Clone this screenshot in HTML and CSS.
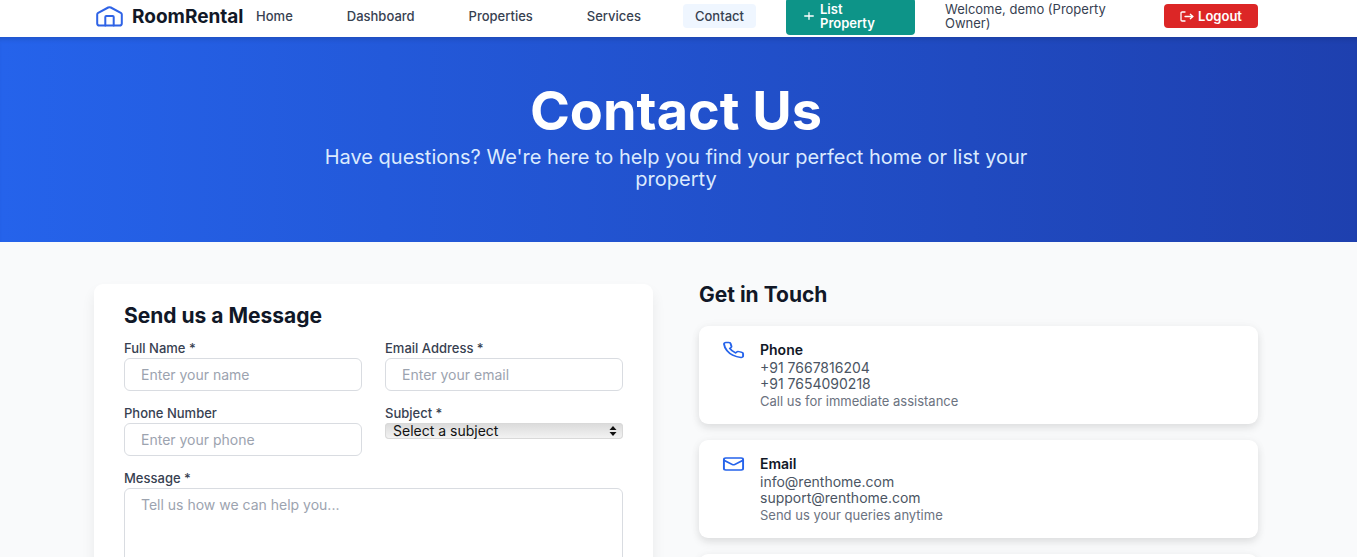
FILE: index.html
```html
<!DOCTYPE html>
<html lang="en">
<head>
<meta charset="utf-8">
<title>RoomRental - Contact Us</title>
<link rel="stylesheet" href="styles.css">
</head>
<body>
<header class="navbar">
  <div class="container navbar-row">
    <a class="brand" href="#">
      <svg class="brand-icon" viewBox="0 0 27 21" fill="none" stroke="currentColor" stroke-width="2" stroke-linejoin="round" stroke-linecap="round" aria-hidden="true">
        <path d="M1.2 8.6Q1.2 7.500 2.200 6.900L12.200 1.500Q13.500.8 14.800 1.500L24.800 6.900Q25.800 7.500 25.800 8.600V17.500Q25.800 19.600 23.500 19.600H3.500Q1.200 19.600 1.200 17.500Z"/>
        <path d="M9.300 19.500V11Q9.300 10 10.300 10H16.700Q17.700 10 17.700 11V19.500"/>
      </svg>
      <span>RoomRental</span>
    </a>
    <nav class="nav-links">
      <a class="nav-link" href="#">Home</a>
      <a class="nav-link" href="#">Dashboard</a>
      <a class="nav-link" href="#">Properties</a>
      <a class="nav-link" href="#">Services</a>
      <a class="nav-link nav-link-active" href="#">Contact</a>
      <a class="list-button" href="#">
        <svg class="plus-icon" viewBox="0 0 10 8" stroke="currentColor" stroke-width="1.300" stroke-linecap="round" aria-hidden="true"><path d="M5 .7V7.300M.7 4H9.300"/></svg>
        <span>List Property</span>
      </a>
      <span class="welcome">Welcome, demo (Property Owner)</span>
      <button class="logout" type="button">
        <svg class="logout-icon" viewBox="0 0 14 11" fill="none" stroke="currentColor" stroke-width="1.300" stroke-linecap="round" stroke-linejoin="round" aria-hidden="true"><path d="M5 1H2.200Q1 1 1 2V9Q1 10 2.200 10H5M5 5.500H13M10.300 3.300L13 5.500L10.300 7.700"/></svg>
        <span>Logout</span>
      </button>
    </nav>
  </div>
</header>

<section class="hero">
  <h1 class="hero-title">Contact Us</h1>
  <p class="hero-text">Have questions? We're here to help you find your perfect home or list your property</p>
</section>

<main class="container content">
  <form class="card form-card">
    <h2 class="heading">Send us a Message</h2>
    <div class="form-grid">
      <div class="field">
        <label class="label" for="name">Full Name *</label>
        <input class="input" id="name" type="text" placeholder="Enter your name">
      </div>
      <div class="field">
        <label class="label" for="email">Email Address *</label>
        <input class="input" id="email" type="email" placeholder="Enter your email">
      </div>
      <div class="field">
        <label class="label" for="phone">Phone Number</label>
        <input class="input" id="phone" type="tel" placeholder="Enter your phone">
      </div>
      <div class="field">
        <label class="label" for="subject">Subject *</label>
        <div class="select-wrap">
          <select class="select" id="subject"><option>Select a subject</option></select>
          <svg class="select-arrows" viewBox="0 0 8 10" fill="currentColor" aria-hidden="true"><path d="M4 0L7.500 4H.5ZM4 10L.5 6H7.500Z"/></svg>
        </div>
      </div>
      <div class="field field-wide">
        <label class="label" for="message">Message *</label>
        <textarea class="input textarea" id="message" rows="6" placeholder="Tell us how we can help you..."></textarea>
      </div>
    </div>
  </form>

  <section class="contact-info">
    <h2 class="heading">Get in Touch</h2>
    <div class="info-list">
      <article class="card info-card">
        <svg class="info-icon" viewBox="0 0 24 24" preserveAspectRatio="none" fill="none" stroke="currentColor" stroke-width="2" stroke-linecap="round" stroke-linejoin="round" aria-hidden="true"><path d="M22 16.920v3a2 2 0 0 1-2.180 2 19.790 19.790 0 0 1-8.630-3.070 19.500 19.500 0 0 1-6-6 19.790 19.790 0 0 1-3.070-8.670A2 2 0 0 1 4.110 2h3a2 2 0 0 1 2 1.720 12.840 12.840 0 0 0 .7 2.810 2 2 0 0 1-.45 2.110L8.090 9.910a16 16 0 0 0 6 6l1.270-1.270a2 2 0 0 1 2.110-.45 12.840 12.840 0 0 0 2.810.7A2 2 0 0 1 22 16.920z"/></svg>
        <div>
          <h3 class="info-title">Phone</h3>
          <p class="info-line">+91 7667816204</p>
          <p class="info-line">+91 7654090218</p>
          <p class="info-note">Call us for immediate assistance</p>
        </div>
      </article>
      <article class="card info-card">
        <svg class="info-icon" viewBox="0 0 24 24" preserveAspectRatio="none" fill="none" stroke="currentColor" stroke-width="2" stroke-linecap="round" stroke-linejoin="round" aria-hidden="true"><rect x="2" y="4" width="20" height="16" rx="2"/><path d="M22 7l-8.970 5.700a1.940 1.940 0 0 1-2.060 0L2 7"/></svg>
        <div>
          <h3 class="info-title">Email</h3>
          <p class="info-line">info@renthome.com</p>
          <p class="info-line">support@renthome.com</p>
          <p class="info-note">Send us your queries anytime</p>
        </div>
      </article>
      <article class="card info-card"></article>
    </div>
  </section>
</main>
</body>
</html>
```
FILE: styles.css
```css
* { box-sizing: border-box; }
body {
  margin: 0;
  height: 100vh;
  overflow: hidden;
  background: #f9fafb;
  color: #111827;
  font-family: Inter, "Liberation Sans", sans-serif;
}
h1, h2, h3, p { margin: 0; }
a { color: inherit; text-decoration: none; }
button, input, select, textarea { font: inherit; }
.container { padding: 0 99px 0 94px; }

.navbar { background: #fff; }
.navbar-row {
  display: flex;
  align-items: center;
  justify-content: space-between;
  height: 37px;
  padding-bottom: 5px;
}
.brand {
  display: flex;
  align-items: center;
  gap: 9px;
  padding-left: 2px;
  font-size: 19px;
  font-weight: 700;
}
.brand-icon { width: 27px; height: 21px; color: #2f63e6; }
.nav-links {
  display: flex;
  align-items: center;
  gap: 30px;
  font-size: 13px;
  line-height: 14px;
  font-weight: 500;
  color: #374151;
}
.nav-link { padding: 5px 12px; border-radius: 4px; }
.nav-link-active { background: #eff6ff; }
.list-button {
  display: flex;
  align-items: center;
  gap: 6px;
  width: 129px;
  height: 37px;
  padding: 0 36px 0 18px;
  border-radius: 4px;
  background: #0d9488;
  color: #fff;
  font-weight: 600;
}
.plus-icon { flex: none; width: 10px; height: 8px; }
.welcome { width: 189px; font-weight: 400; }
.logout {
  display: flex;
  align-items: center;
  justify-content: center;
  gap: 4px;
  width: 94px;
  height: 24px;
  padding: 0;
  border: 0;
  border-radius: 4px;
  background: #dc2626;
  color: #fff;
  font-weight: 600;
}
.logout-icon { width: 14px; height: 11px; }

.hero {
  display: flex;
  flex-direction: column;
  align-items: center;
  gap: 9px;
  padding: 48px 5px 52px 0;
  background: linear-gradient(90deg, #2563eb, #1e40af);
  box-shadow: inset 0 5px 5px -3px rgba(0, 0, 0, 0.15);
  color: #fff;
  text-align: center;
}
.hero-title { font-size: 54px; line-height: 52px; font-weight: 700; }
.hero-text { max-width: 760px; font-size: 20px; line-height: 22px; color: #dbeafe; }

.content {
  display: grid;
  grid-template-columns: 1fr 1fr;
  gap: 46px;
  padding-top: 42px;
}
.card {
  border-radius: 9px;
  background: #fff;
  box-shadow: 0 4px 8px rgba(0, 0, 0, 0.1), 0 0 12px rgba(0, 0, 0, 0.03);
}
.form-card {
  padding: 21px 30px;
  box-shadow: 0 8px 14px rgba(0, 0, 0, 0.07);
}
.heading { font-size: 21px; line-height: 22px; font-weight: 700; }
.form-grid {
  display: grid;
  grid-template-columns: 1fr 1fr;
  gap: 16px 23px;
  margin-top: 15px;
}
.field { display: flex; flex-direction: column; gap: 3px; min-width: 0; }
.field-wide { grid-column: 1 / -1; }
.label { font-size: 13px; line-height: 13px; font-weight: 500; color: #374151; }
.input {
  width: 100%;
  height: 33px;
  padding: 0 16px;
  border: 1px solid #d9dce1;
  border-radius: 6px;
  background: #fff;
  font-size: 14px;
  color: #111827;
}
.input::placeholder { color: #9ca3af; opacity: 1; }
.textarea { height: 128px; padding: 7px 16px; line-height: 18px; resize: none; }
.select-wrap { position: relative; display: flex; }
.select {
  appearance: none;
  width: 100%;
  height: 16px;
  padding: 0 8px;
  border: 0;
  border-radius: 4px;
  background: linear-gradient(#dadada, #f4f4f4);
  box-shadow: inset 0 0 0 1px #d9d9d9;
  font-size: 14px;
  line-height: 16px;
  color: #111;
}
.select-arrows {
  position: absolute;
  top: 3px;
  right: 6px;
  width: 8px;
  height: 10px;
  color: #111;
  pointer-events: none;
}

.info-list { display: flex; flex-direction: column; gap: 16px; margin-top: 20px; }
.info-card {
  display: flex;
  gap: 15px;
  min-height: 98px;
  padding: 15px 23px;
}
.info-icon { flex: none; width: 23px; height: 18px; color: #2563eb; }
.info-title { font-size: 14px; line-height: 18px; font-weight: 600; }
.info-line { font-size: 14px; line-height: 16px; color: #4b5563; }
.info-title + .info-line { margin-top: 1px; }
.info-note { margin-top: 2px; font-size: 13px; line-height: 15px; color: #6b7280; }
```
